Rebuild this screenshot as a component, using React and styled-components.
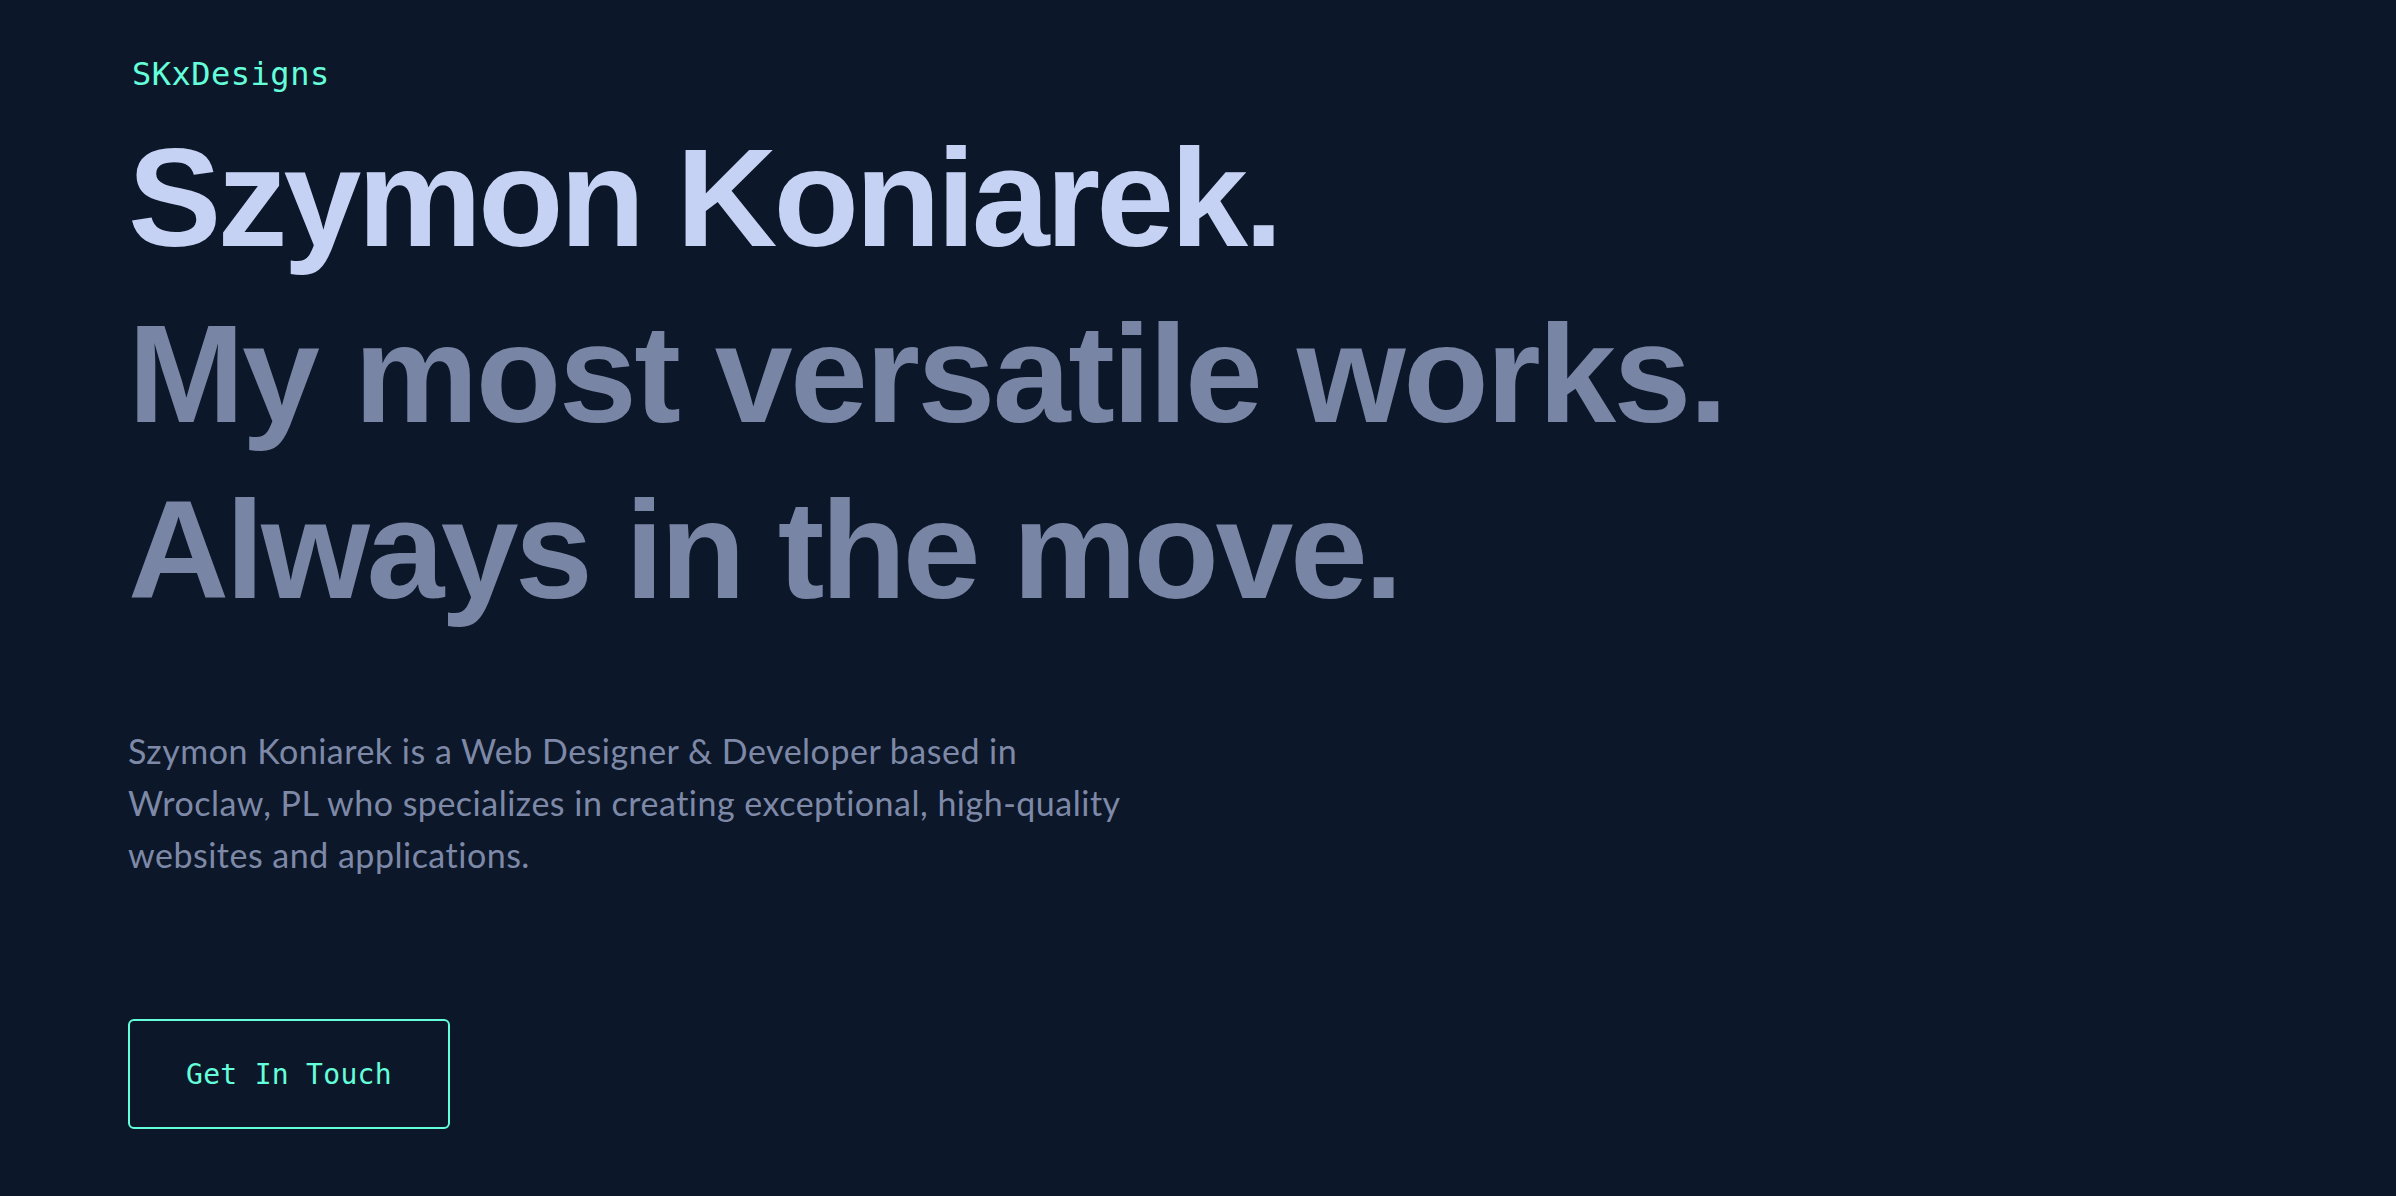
import React from "react";
import styled, { createGlobalStyle } from "styled-components";

const GlobalStyle = createGlobalStyle`
  html, body {
    margin: 0;
    padding: 0;
    background: #0c1729;
  }
  body {
    font-family: "Lato", "Liberation Sans", sans-serif;
  }
  * { box-sizing: border-box; }
`;

const Page = styled.main`
  min-height: 1196px;
  background: #0c1729;
  padding: 58px 0 0 128px;
  display: flex;
  flex-direction: column;
  align-items: flex-start;
`;

const Logo = styled.div`
  font-family: "DejaVu Sans Mono", "Liberation Mono", monospace;
  font-size: 32px;
  line-height: 32px;
  letter-spacing: 0.5px;
  color: #64ffda;
  margin-left: 4px;
`;

const Heading = styled.h1`
  margin: 20px 0 0 0;
  font-family: "Liberation Sans", Arial, sans-serif;
  font-weight: 700;
  font-size: 140px;
  line-height: 176px;
  display: flex;
  flex-direction: column;
`;

const Line = styled.span`
  color: ${(p) => (p.$bright ? "#c6d2f4" : "#7985a5")};
  white-space: nowrap;
  letter-spacing: ${(p) => p.$track};
`;

const Intro = styled.p`
  margin: 87px 0 0 0;
  max-width: 1010px;
  font-family: "Lato", "Liberation Sans", sans-serif;
  font-weight: 400;
  font-size: 34px;
  line-height: 52px;
  letter-spacing: 0.5px;
  color: #7e89a8;
`;

const Button = styled.a`
  margin-top: 138px;
  display: inline-flex;
  align-items: center;
  justify-content: center;
  height: 110px;
  padding: 0 56px;
  border: 2px solid #64ffda;
  border-radius: 6px;
  font-family: "DejaVu Sans Mono", "Liberation Mono", monospace;
  font-size: 28px;
  letter-spacing: 0.3px;
  color: #64ffda;
  text-decoration: none;
  cursor: pointer;
`;

export default function App() {
  return (
    <>
      <GlobalStyle />
      <Page>
        <Logo>SKxDesigns</Logo>
        <Heading>
          <Line $bright $track="-3.9px">Szymon Koniarek.</Line>
          <Line $track="-2.5px">My most versatile works.</Line>
          <Line $track="-3.5px">Always in the move.</Line>
        </Heading>
        <Intro>
          Szymon Koniarek is a Web Designer &amp; Developer based in Wroclaw, PL
          who specializes in creating exceptional, high-quality websites and
          applications.
        </Intro>
        <Button href="#contact">Get In Touch</Button>
      </Page>
    </>
  );
}
